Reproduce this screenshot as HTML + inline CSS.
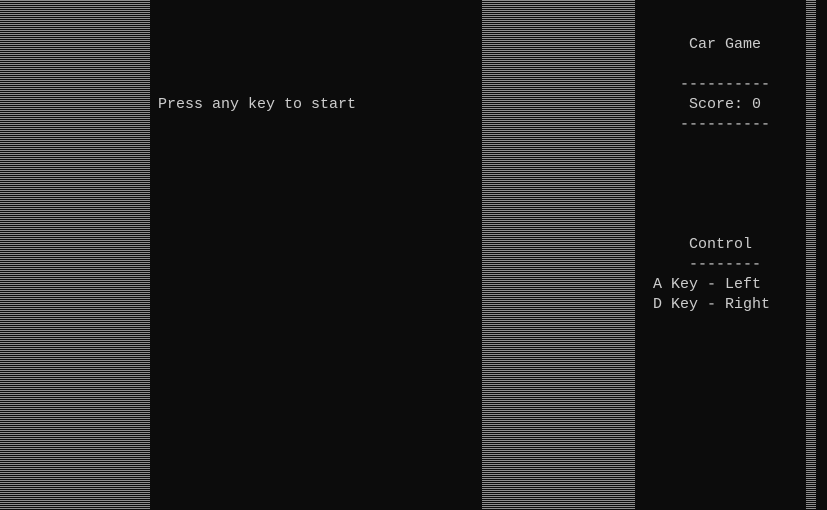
<!DOCTYPE html>
<html><head><style>
html,body{margin:0;padding:0;width:827px;height:510px;background:#0c0c0c;overflow:hidden}
.s{position:absolute;top:0;height:510px;background:repeating-linear-gradient(to bottom,#8e8e8e 0,#8e8e8e 1px,#0c0c0c 1px,#0c0c0c 2px)}
.t{position:absolute;font-family:"Liberation Mono",monospace;font-size:15px;line-height:20px;color:#cccccc;white-space:pre}
</style></head><body>
<div class="s" style="left:0;width:150px"></div>
<div class="s" style="left:482px;width:153px"></div>
<div class="s" style="left:806px;width:10px"></div>
<div class="t" style="left:158px;top:95px">Press any key to start</div>
<div class="t" style="left:689px;top:35px">Car Game</div>
<div class="t" style="left:680px;top:75px">----------</div>
<div class="t" style="left:689px;top:95px">Score: 0</div>
<div class="t" style="left:680px;top:115px">----------</div>
<div class="t" style="left:689px;top:235px">Control</div>
<div class="t" style="left:689px;top:255px">--------</div>
<div class="t" style="left:653px;top:275px">A Key - Left</div>
<div class="t" style="left:653px;top:295px">D Key - Right</div>
</body></html>
